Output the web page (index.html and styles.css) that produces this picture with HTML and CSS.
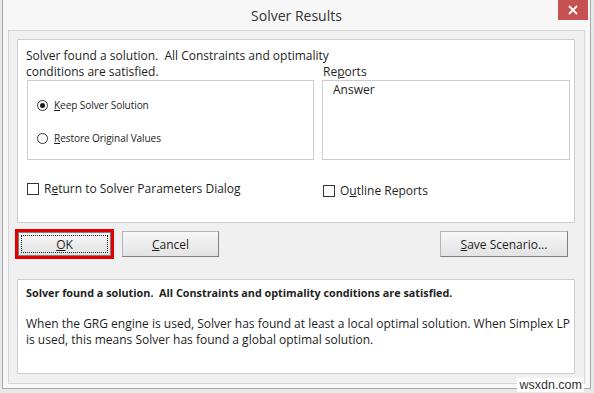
FILE: index.html
```html
<!DOCTYPE html>
<html>
<head>
<meta charset="utf-8">
<link rel="stylesheet" href="styles.css">
</head>
<body>
<div class="window">
  <div class="titlebar">
    <div class="title">Solver Results</div>
    <div class="close"><svg width="10" height="10" viewBox="0 0 10 10"><path d="M1 1 L9 9 M9 1 L1 9" stroke="#fff" stroke-width="1.8"/></svg></div>
  </div>
  <div class="client">
    <div class="panel top">
      <div class="grid">
        <div class="message"><div class="line">Solver found a solution.&nbsp; All Constraints and optimality</div><div class="line">conditions are satisfied.</div></div>
        <div class="reports-label">Re<u>p</u>orts</div>
        <div class="groupbox">
          <div class="radio"><span class="circle checked"></span><span class="rlabel"><u>K</u>eep Solver Solution</span></div>
          <div class="radio"><span class="circle"></span><span class="rlabel"><u>R</u>estore Original Values</span></div>
        </div>
        <div class="listbox"><div class="item">Answer</div></div>
        <div class="check left"><span class="box"></span><span>R<u>e</u>turn to Solver Parameters Dialog</span></div>
        <div class="check right"><span class="box"></span><span>O<u>u</u>tline Reports</span></div>
      </div>
    </div>
    <div class="buttons">
      <div class="focus-ring"><div class="btn ok"><span class="dots"><u>O</u>K</span></div></div>
      <div class="btn cancel"><span><u>C</u>ancel</span></div>
      <div class="spacer"></div>
      <div class="btn save"><span><u>S</u>ave Scenario...</span></div>
    </div>
    <div class="panel bottom">
      <div class="bold">Solver found a solution.&nbsp; All Constraints and optimality conditions are satisfied.</div>
      <div class="body">When the GRG engine is used, Solver has found at least a local optimal solution. When Simplex LP is used, this means Solver has found a global optimal solution.</div>
    </div>
  </div>
  <div class="watermark">wsxdn.com</div>
</div>
</body>
</html>
```
FILE: styles.css
```css
html, body {
  margin: 0;
  padding: 0;
  background: #e8e8e8;
  width: 594px;
  height: 393px;
  overflow: hidden;
}
body {
  font-family: "Open Sans", "Noto Sans", sans-serif;
  color: #1e1e1e;
}
.window {
  position: relative;
  margin-left: 2px;
  width: 589px;
  height: 389px;
  background: #f7f7f7;
  border: 1px solid #a8a8a8;
  border-top: none;
  box-sizing: border-box;
}
.titlebar {
  height: 30px;
  position: relative;
  display: flex;
  justify-content: center;
  align-items: center;
}
.title {
  font-family: "Open Sans", sans-serif;
  font-size: 14px;
  color: #333;
  margin-top: 1px;
}
.close {
  position: absolute;
  right: 2px;
  top: 0;
  width: 30px;
  height: 20px;
  background: #c75050;
  display: flex;
  align-items: center;
  justify-content: center;
}
.client {
  margin: 0 5px;
  height: 354px;
  box-sizing: border-box;
  border: 1px solid #d5d5d5;
  background: #f0f0f0;
  padding: 8px 9px 0 8px;
  display: flex;
  flex-direction: column;
}
.panel {
  background: #fff;
  border: 1px solid #c9cdd1;
  box-sizing: border-box;
}
.panel.top {
  height: 184px;
  padding: 8px 0 0 9px;
}
.grid {
  display: grid;
  grid-template-columns: 287px 248px;
  grid-template-rows: 16px 16px 80px auto;
  column-gap: 8px;
  font-size: 12px;
}
.message {
  grid-column: 1;
  grid-row: 1 / 3;
  line-height: 16px;
  margin-left: -1px;
  font-size: 12px;
}
.line {
  width: max-content;
  white-space: nowrap;
}
.reports-label {
  grid-column: 2;
  grid-row: 2;
  line-height: 16px;
  font-size: 12px;
  padding-left: 1px;
}
.groupbox {
  grid-column: 1;
  grid-row: 3;
  border: 1px solid #c9cdd1;
  box-sizing: border-box;
  padding: 17px 0 0 9px;
  display: flex;
  flex-direction: column;
  gap: 19px;
}
.radio {
  display: flex;
  align-items: center;
  height: 14px;
  font-size: 10.1px;
  letter-spacing: -0.1px;
}
.circle {
  width: 11px;
  height: 11px;
  border: 1px solid #333;
  border-radius: 50%;
  box-sizing: border-box;
  margin-right: 6px;
  display: flex;
  align-items: center;
  justify-content: center;
  background: #fff;
}
.circle.checked::after {
  content: "";
  width: 5px;
  height: 5px;
  border-radius: 50%;
  background: #1a1a1a;
}
.listbox {
  grid-column: 2;
  grid-row: 3;
  border: 1px solid #c9cdd1;
  box-sizing: border-box;
  padding: 1px 0 0 10px;
}
.item {
  font-size: 12px;
  line-height: 16px;
}
.check {
  grid-row: 4;
  display: flex;
  align-items: center;
  font-size: 12px;
  line-height: 16px;
  margin-top: 21px;
  align-self: start;
}
.check.left { grid-column: 1; }
.check.right {
  grid-column: 2;
  margin-top: 23px;
  padding-left: 1px;
}
.box {
  width: 12px;
  height: 12px;
  border: 1px solid #333;
  box-sizing: border-box;
  margin-right: 5px;
  background: #fff;
}
.buttons {
  display: flex;
  align-items: center;
  height: 40px;
  margin-top: 1px;
  padding-right: 7px;
}
.focus-ring {
  width: 99px;
  height: 30px;
  box-sizing: border-box;
  border: 3px solid #e00000;
  margin-left: -2px;
  display: flex;
}
.btn {
  box-sizing: border-box;
  height: 26px;
  border: 1px solid #b5b5b5;
  border-right-color: #7f7f7f;
  border-bottom-color: #7f7f7f;
  background: linear-gradient(#f7f7f7, #e3e3e3);
  display: flex;
  align-items: center;
  justify-content: center;
  font-size: 12px;
  color: #1e1e1e;
}
.btn.ok {
  width: 93px;
  height: 24px;
  padding: 2px;
  border-color: #7f7f7f;
}
.dots {
  flex: 1;
  align-self: stretch;
  border: 1px dotted #222;
  display: flex;
  align-items: center;
  justify-content: center;
}
.btn.cancel {
  width: 97px;
  margin-left: 8px;
}
.spacer { flex: 1; }
.btn.save {
  width: 128px;
}
.panel.bottom {
  margin-top: 15px;
  height: 95px;
  padding: 5px 9px 0 8px;
}
.bold {
  font-weight: bold;
  font-size: 10.8px;
  line-height: 16px;
}
.body {
  margin-top: 15px;
  font-size: 12px;
  line-height: 16px;
  width: 545px;
}
.watermark {
  position: absolute;
  right: 6px;
  bottom: -4px;
  background: #fff;
  font-family: "Liberation Sans", Arial, sans-serif;
  font-size: 12.5px;
  color: #333;
  padding: 0 2px;
  line-height: 14px;
}
```
